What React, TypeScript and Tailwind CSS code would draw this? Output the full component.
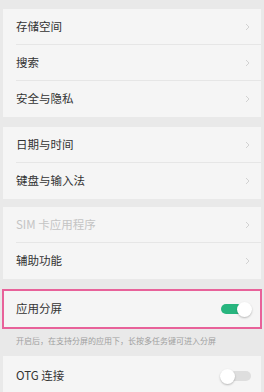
import React from "react";

const font = { fontFamily: '"Noto Sans CJK SC", "Noto Sans", sans-serif' };

function Chevron() {
  return (
    <svg width="5" height="8" viewBox="0 0 5 8" className="shrink-0">
      <path d="M1 1 L4 4 L1 7" fill="none" stroke="#d2d2d2" strokeWidth="1" />
    </svg>
  );
}

function Row({ label, last, disabled }: { label: string; last?: boolean; disabled?: boolean }) {
  return (
    <div className="pl-[13px]">
      <div className={`h-[36px] flex items-center justify-between pr-[11px] ${last ? "" : "border-b border-[#e6e6e6]"}`}>
        <span className={`text-[11.5px] ${disabled ? "text-[#c4c4c4]" : "text-[#333333]"}`}>{label}</span>
        <Chevron />
      </div>
    </div>
  );
}

function Toggle({ on }: { on: boolean }) {
  return (
    <div className="relative w-[32px] h-[15px] flex items-center">
      <div className={`absolute left-[1px] right-[1px] h-[10px] rounded-full ${on ? "bg-[#27b57e]" : "bg-[#dedede]"}`} />
      <div
        className={`absolute top-0 h-[15px] w-[15px] rounded-full bg-white shadow-[0_1px_2px_rgba(0,0,0,0.25)] ${on ? "right-0" : "left-0"}`}
      />
    </div>
  );
}

export default function App() {
  return (
    <div className="w-[264px] h-[392px] bg-[#e9e9e9] overflow-hidden" style={font}>
      <div className="pt-[9px] px-[3px] flex flex-col">
        <div className="bg-[#f5f5f5]">
          <Row label="存储空间" />
          <Row label="搜索" />
          <Row label="安全与隐私" last />
        </div>
        <div className="h-[10px]" />
        <div className="bg-[#f5f5f5]">
          <Row label="日期与时间" />
          <Row label="键盘与输入法" last />
        </div>
        <div className="h-[8px]" />
        <div className="bg-[#f5f5f5]">
          <Row label="SIM 卡应用程序" disabled />
          <Row label="辅助功能" last />
        </div>
        <div className="h-[10px]" />
        <div className="-mx-[1px] border-2 border-[#e8629a] bg-[#f5f5f5] h-[40px] flex items-center justify-between pl-[12px] pr-[8px]">
          <span className="text-[11.5px] text-[#333333]">应用分屏</span>
          <Toggle on />
        </div>
        <div className="h-[23px] flex items-center pl-[13px] text-[8px] text-[#a0a0a0] whitespace-nowrap">
          开启后，在支持分屏的应用下，长按多任务键可进入分屏
        </div>
        <div className="h-[4px]" />
        <div className="bg-[#f5f5f5] h-[40px] flex items-center justify-between pl-[13px] pr-[9px]">
          <span className="text-[11.5px] text-[#333333]">OTG 连接</span>
          <Toggle on={false} />
        </div>
      </div>
    </div>
  );
}
